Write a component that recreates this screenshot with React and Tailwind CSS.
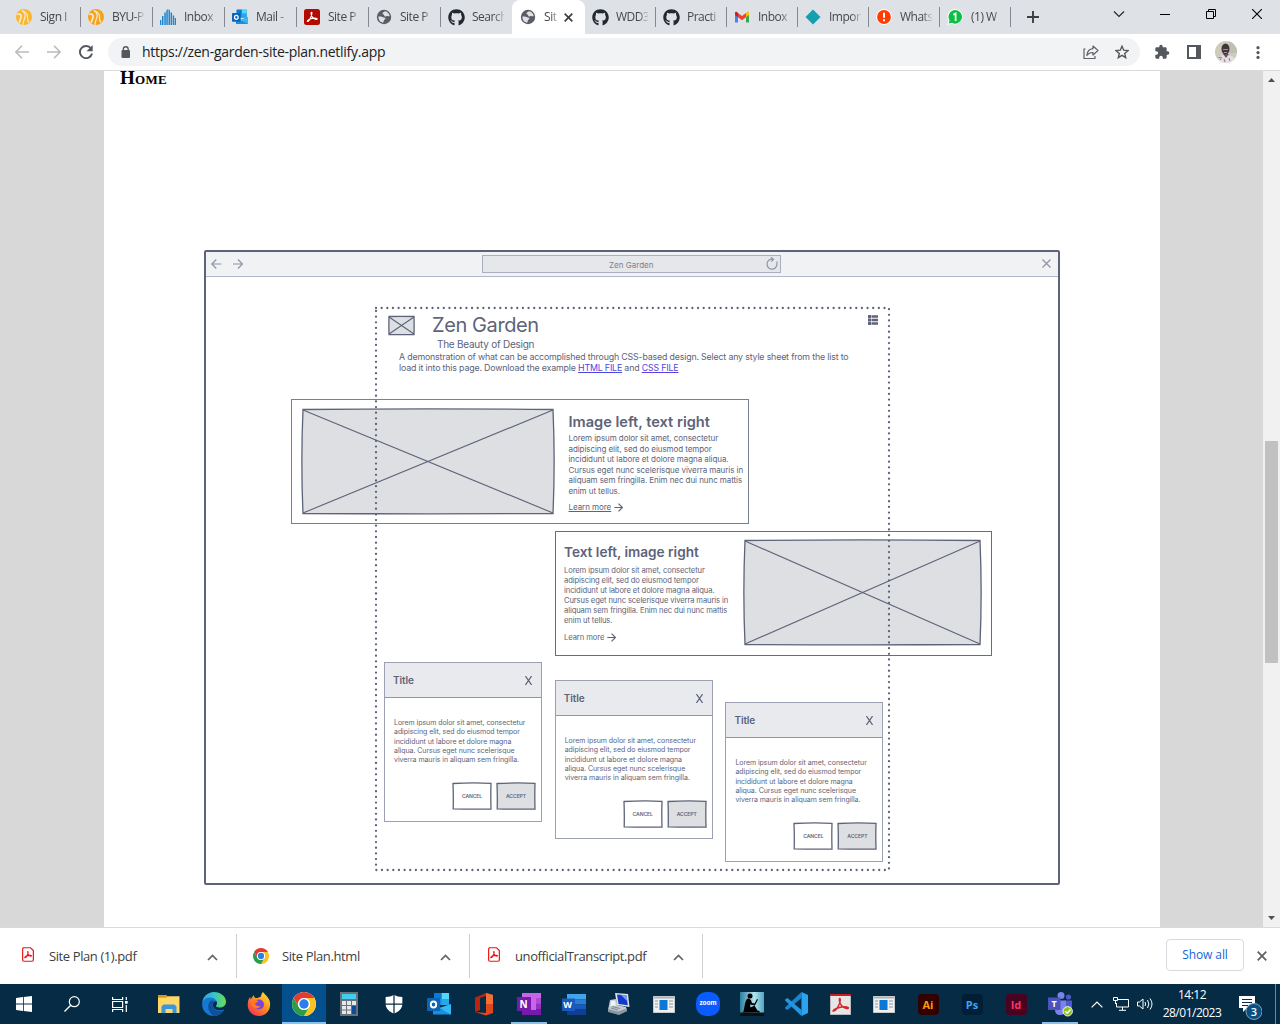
import React from "react";
import { FaGithub } from "react-icons/fa";

const INK = "#5d6379";

/* ---------- browser icons ---------- */
function ByuIcon({ color }) {
  return (
    <svg className="size-4 shrink-0" viewBox="0 0 16 16">
      <circle cx="8" cy="8" r="8" fill={color} />
      <path d="M.8 5.500C2.500 4.500 5 5 5.200 7c.2 2-1.400 3.500-2 6.800" fill="none" stroke="#f3ead2" strokeWidth="1.700" />
      <path d="M6 1.500c3.200 2.500 3.500 4 3 6.500-.5 2-2 4-1.800 7.800M6 1.500C10 3 12 5 11.500 8.500c-.2 2 0 3.500 1.600 5" fill="none" stroke="#f3ead2" strokeWidth="1.200" />
    </svg>
  );
}
function BarsIcon() {
  return (
    <svg className="size-4 shrink-0" viewBox="0 0 16 16" fill="#1f86d0">
      <path d="M0 11h1.300v5H0zM2 7h1.500v9H2zM4.300 3.500h1.500V16H4.300zM6.300 1.500l1.500-1.500v16H6.300zM8.500 0L10 1.500V16H8.500zM10.600 3.500h1.500V16h-1.500zM12.800 6.500h1.400V16h-1.400zM14.800 9H16v7h-1.200z" />
    </svg>
  );
}
function OutlookIcon({ className }) {
  return (
    <svg className={className} viewBox="0 0 24 24">
      <path d="M7 1h15v12H7z" fill="#1490df" />
      <path d="M14.500 1H22v6h-7.500z" fill="#50d9ff" />
      <path d="M7 1h7.500v6H7z" fill="#0f78d4" />
      <path d="M14.500 7H22v6h-7.500z" fill="#28a8ea" />
      <path d="M6 12l9 6 9-6v10.500H6z" fill="#1a8fe0" />
      <path d="M24 12v10.500L12 16z" fill="#35b8f1" />
      <rect x="0" y="6" width="13" height="13" rx="1" fill="#0a64b8" />
      <ellipse cx="6.500" cy="12.500" rx="2.700" ry="3" fill="none" stroke="#fff" strokeWidth="1.900" />
    </svg>
  );
}
function AcrobatIcon() {
  return (
    <svg className="size-4 shrink-0" viewBox="0 0 16 16">
      <rect width="16" height="16" rx="2.500" fill="#b30b00" />
      <path d="M3.200 12.300c1.200.8 3-2.200 4-5C8 5 8.200 3.200 7.500 3.200S6.800 5.400 8 7.500c1.200 2 3.400 3.200 4.700 2.900 1.200-.4.200-1.500-2.700-1.300-2.800.2-6.700 1.600-6.800 3.200z" fill="none" stroke="#fff" strokeWidth="1.100" />
    </svg>
  );
}
function GlobeIcon() {
  return (
    <svg className="size-4 shrink-0" viewBox="0 0 16 16">
      <circle cx="8" cy="8" r="7.200" fill="#5a5e62" />
      <path d="M9 2.300c2.400.3 4.600 2.500 4.700 5-1 .3-1.700-.5-2.700-.3-.6.200-1.300.8-2.200.4-1-.6-.1-1.600-1.300-2C6.500 5 6 4.500 7 3.600zM2.400 7.600c1.500-.4 3.700-.2 4.600.6.900.7 2.400.3 2.500 1.300 0 1-1.300 1-1.700 1.900-.3.700 0 1.800-.7 2.300C4.300 13.300 2.300 11 2.400 7.600z" fill="#dee1e6" />
    </svg>
  );
}
function GmailIcon() {
  return (
    <svg className="size-4 shrink-0" viewBox="0 0 16 16">
      <path d="M1 5v8.500h3V7z" fill="#4285f4" />
      <path d="M15 5v8.500h-3V7z" fill="#34a853" />
      <path d="M12 4l1-1c1-.6 2 0 2 1v2l-3 2.300z" fill="#fbbc04" />
      <path d="M4 4L3 3c-1-.6-2 0-2 1v2l3 2.300z" fill="#c5221f" />
      <path d="M4 4l4 3 4-3v4.300l-4 3-4-3z" fill="#ea4335" />
    </svg>
  );
}
function DiamondIcon() {
  return (
    <svg className="size-4 shrink-0" viewBox="0 0 16 16">
      <path d="M8 .5L15.500 8 8 15.500.5 8z" fill="#169fae" />
    </svg>
  );
}
function AlertIcon() {
  return (
    <svg className="size-4 shrink-0" viewBox="0 0 16 16">
      <circle cx="8" cy="8" r="7.900" fill="#fff" />
      <circle cx="8" cy="8" r="6.900" fill="#ff3d00" />
      <path d="M8 3.800v5" stroke="#fff" strokeWidth="2" />
      <path d="M8 10.200v2" stroke="#fff" strokeWidth="2" />
    </svg>
  );
}
function WhatsIcon() {
  return (
    <svg className="size-4 shrink-0" viewBox="0 0 16 16">
      <path d="M8.300 0A7.700 7.700 0 1 1 5 14.800L.2 16l1.200-4.600A7.700 7.700 0 0 1 8.300 0z" fill="#fff" />
      <path d="M8.300 1A6.800 6.800 0 1 1 5 13.800l-3.300.8.900-3.200A6.800 6.800 0 0 1 8.300 1z" fill="#0ac143" />
      <path d="M6.300 5.800l2.300-1.300V12" fill="none" stroke="#fff" strokeWidth="1.700" />
    </svg>
  );
}
const GithubIcon = () => <FaGithub className="size-[17px] shrink-0 text-[#24292f]" />;

const TABS = [
  { label: "Sign I", icon: <ByuIcon color="#fbb62c" /> },
  { label: "BYU-P", icon: <ByuIcon color="#f5a31c" /> },
  { label: "Inbox", icon: <BarsIcon />, solid: true },
  { label: "Mail -", icon: <OutlookIcon className="size-4 shrink-0" />, solid: true },
  { label: "Site P", icon: <AcrobatIcon /> },
  { label: "Site P", icon: <GlobeIcon /> },
  { label: "Search", icon: <GithubIcon /> },
  { label: "Sit", icon: <GlobeIcon />, active: true },
  { label: "WDD3", icon: <GithubIcon />, slim: true },
  { label: "Practi", icon: <GithubIcon />, slim: true },
  { label: "Inbox", icon: <GmailIcon />, slim: true },
  { label: "Impor", icon: <DiamondIcon />, slim: true },
  { label: "Whats", icon: <AlertIcon />, slim: true },
  { label: "(1) W", icon: <WhatsIcon />, slim: true },
];

function Tab({ label, icon, active, slim }) {
  if (active) {
    return (
      <div className="flex h-[34px] w-[73px] items-center rounded-t-lg bg-white pl-2">
        {icon}
        <span className="ml-2 w-[14px] whitespace-nowrap text-[12px] tracking-[-0.4px] text-[#45494d] [mask-image:linear-gradient(to_right,black_50%,transparent_110%)]">
          {label}
        </span>
        <svg className="ml-[6px] size-[9px]" viewBox="0 0 9 9">
          <path d="M.7.700l7.600 7.600M8.300.7L.7 8.300" stroke="#3c4043" strokeWidth="1.700" />
        </svg>
      </div>
    );
  }
  return (
    <div className={slim ? "flex h-[34px] w-[71px] items-center pl-[7px]" : "flex h-[34px] w-[72px] items-center pl-2"}>
      <div className="flex w-4 shrink-0 justify-center">{icon}</div>
      <span className="ml-2 w-8 whitespace-pre text-[12px] tracking-[-0.5px] text-[#45494d] [mask-image:linear-gradient(to_right,black_70%,transparent_105%)]">
        {label}
      </span>
      {label !== "Search" && <span className={slim ? "ml-auto h-5 w-px bg-[#85898f]" : "-mr-px ml-auto h-5 w-px bg-[#85898f]"} />}
    </div>
  );
}

function TabStrip() {
  return (
    <div className="flex h-[34px] bg-[#dee1e6] pl-2">
      <div className="flex">
        {TABS.map((t, i) => (
          <Tab key={i} {...t} />
        ))}
      </div>
      <svg className="mt-[11px] ml-[16px] size-3" viewBox="0 0 12 12">
        <path d="M6 0v12M0 6h12" stroke="#3c4043" strokeWidth="1.900" />
      </svg>
      <svg className="mt-[9px] ml-auto h-[10px] w-[12px]" viewBox="0 0 12 10">
        <path d="M1 2.500l5 5 5-5" fill="none" stroke="#222" strokeWidth="1.100" />
      </svg>
      <svg className="mt-[9px] ml-[35px] h-[10px] w-[10px]" viewBox="0 0 10 10">
        <path d="M0 5.500h10" stroke="#000" />
      </svg>
      <svg className="mt-[9px] ml-[36px] h-[10px] w-[10px]" viewBox="0 0 10 10">
        <path d="M.5 2.500h7v7h-7zM2.500 2.500v-2h7v7h-2" fill="none" stroke="#000" />
      </svg>
      <svg className="mt-[9px] mr-[18px] ml-[36px] h-[10px] w-[10px]" viewBox="0 0 10 10">
        <path d="M0 0l10 10M10 0L0 10" stroke="#000" strokeWidth="1.100" />
      </svg>
    </div>
  );
}

function Toolbar() {
  return (
    <div className="flex h-[37px] items-center border-b border-[#d8dadc] bg-white">
      <svg className="ml-[15px] size-[14px]" viewBox="0 0 14 14">
        <path d="M14 7H1M7 .8L.9 7 7 13.200" fill="none" stroke="#b9bbbd" strokeWidth="1.600" />
      </svg>
      <svg className="ml-[18px] size-[14px]" viewBox="0 0 14 14">
        <path d="M0 7h13M7 .8L13.100 7 7 13.200" fill="none" stroke="#b9bbbd" strokeWidth="1.600" />
      </svg>
      <svg className="ml-[18px] size-[14px]" viewBox="0 0 14 14">
        <path d="M12 3.500A6.100 6.100 0 1 0 13 8.500" fill="none" stroke="#54585c" strokeWidth="1.900" />
        <path d="M13.700 0v6.200H7.500z" fill="#54585c" />
      </svg>
      <div className="ml-[15px] flex h-7 w-[1032px] items-center rounded-full bg-[#f1f3f4]">
        <svg className="ml-[13px] h-[12px] w-[10px]" viewBox="0 0 10 12">
          <rect x="0.500" y="4" width="8.500" height="8" rx="1" fill="#54585c" />
          <path d="M2.300 5V3.200a2.400 2.400 0 0 1 4.900 0V5" fill="none" stroke="#54585c" strokeWidth="1.300" />
        </svg>
        <span className="ml-[11px] text-[14px] leading-7 tracking-[-0.28px] text-[#202124]">https://zen-garden-site-plan.netlify.app</span>
        <svg className="ml-auto h-[15px] w-[16px]" viewBox="0 0 16 15">
          <path d="M2.500 4H1v9.500h11V11" fill="none" stroke="#5f6368" strokeWidth="1.200" />
          <path d="M10 1l5 4.500L10 10V7.500C7 7.400 5.300 8.300 3.800 10.500 4.200 6.500 6.500 3.900 10 3.600z" fill="none" stroke="#5f6368" strokeWidth="1.200" strokeLinejoin="round" />
        </svg>
        <svg className="mr-[11px] ml-[16px] size-[14px]" viewBox="0 0 14 14">
          <path d="M7 1.200l1.700 4 4.300.4-3.300 2.800 1 4.300L7 10.400l-3.700 2.300 1-4.300L1 5.600l4.300-.4z" fill="none" stroke="#54585c" strokeWidth="1.400" />
        </svg>
      </div>
      <svg className="ml-[14px] size-[16px]" viewBox="0 0 24 24" fill="#54585c">
        <path d="M20.500 11H19V7c0-1.100-.9-2-2-2h-4V3.500a2.500 2.500 0 0 0-5 0V5H4c-1.100 0-2 .9-2 2v3.800h1.500a2.700 2.700 0 0 1 0 5.400H2V20c0 1.100.9 2 2 2h3.800v-1.500a2.700 2.700 0 0 1 5.400 0V22H17c1.100 0 2-.9 2-2v-4h1.500a2.500 2.500 0 0 0 0-5z" />
      </svg>
      <svg className="ml-[17px] size-[14px]" viewBox="0 0 14 14">
        <path d="M1 1h12v12H1z" fill="#fff" stroke="#54585c" strokeWidth="2" />
        <path d="M9 1h4v12H9z" fill="#54585c" />
      </svg>
      <svg className="ml-[14px] size-[22px]" viewBox="0 0 22 22">
        <defs>
          <clipPath id="avatar"><circle cx="11" cy="11" r="11" /></clipPath>
        </defs>
        <g clipPath="url(#avatar)">
          <path d="M0 0h22v22H0z" fill="#cdcbb9" />
          <path d="M14 0h8v12h-8z" fill="#bfc0b4" />
          <path d="M1 22c0-6 4-8 9.500-8s10 2 10 8z" fill="#e4dfe5" />
          <path d="M8 13l3 4 3-4z" fill="#6b5660" />
          <ellipse cx="10.500" cy="8" rx="4" ry="5.600" fill="#42343b" />
          <path d="M8 8.500h5M9 11.500h3" stroke="#a08a96" strokeWidth="1" />
          <path d="M5 19l2-3M15 20l-1-3M10 21l-1-3M3 17l3-1" stroke="#8a8088" />
        </g>
      </svg>
      <svg className="ml-[19px] h-[13px] w-[4px]" viewBox="0 0 4 13" fill="#54585c">
        <circle cx="2" cy="1.700" r="1.600" />
        <circle cx="2" cy="6.600" r="1.600" />
        <circle cx="2" cy="11.400" r="1.600" />
      </svg>
    </div>
  );
}

/* ---------- wireframe ---------- */
function ImageBox({ className, w, h, bow = 1.2 }) {
  return (
    <svg className={className} width={w} height={h} viewBox={`0 0 ${w} ${h}`}>
      <path
        d={`M2 1.500Q${w / 2} ${1.500 - bow} ${w - 2} 1.500Q${w - 2 + bow * 1.9} ${h / 2} ${w - 2} ${h - 1.500}Q${w / 2} ${h - 1.500 + bow / 2} 2 ${h - 1.500}Q${2 - bow * 1.9} ${h / 2} 2 1.500Z`}
        fill="#dedfe3" stroke={INK} strokeWidth="1.300"
      />
      <path d={`M2 2L${w - 2} ${h - 2}M${w - 2} 2L2 ${h - 2}`} stroke={INK} strokeWidth="1.100" />
    </svg>
  );
}

function Arrow({ className }) {
  return (
    <svg className={className} viewBox="0 0 9 9">
      <path d="M.3 4.500h8M4.500.6l4 3.900-4 3.900" fill="none" stroke={INK} strokeWidth="1.200" />
    </svg>
  );
}

const LOREM = [
  "Lorem ipsum dolor sit amet, consectetur",
  "adipiscing elit, sed do eiusmod tempor",
  "incididunt ut labore et dolore magna aliqua.",
  "Cursus eget nunc scelerisque viverra mauris in",
  "aliquam sem fringilla. Enim nec dui nunc mattis",
  "enim ut tellus.",
];
const LOREM_CARD = [
  "Lorem ipsum dolor sit amet, consectetur",
  "adipiscing elit, sed do eiusmod tempor",
  "incididunt ut labore et dolore magna",
  "aliqua. Cursus eget nunc scelerisque",
  "viverra mauris in aliquam sem fringilla.",
];

function Lines({ lines, className }) {
  return (
    <div className={className}>
      {lines.map((l) => (
        <div key={l} className="whitespace-nowrap">{l}</div>
      ))}
    </div>
  );
}

function SketchButton({ children, fill }) {
  return (
    <div className="relative grid h-7 w-10 place-items-center">
      <svg className="absolute inset-0 h-7 w-10" viewBox="0 0 40 28">
        <path d="M1 1.500Q20 .5 39 1.300Q38.600 14 39 27Q20 27.500 1.200 26.800Q1.500 14 1 1.500Z" fill={fill} stroke={INK} strokeWidth="1.300" />
      </svg>
      <span className="relative text-[5px] font-semibold tracking-[-0.05px]">{children}</span>
    </div>
  );
}

function DialogCard({ className }) {
  return (
    <div className={className}>
      <div className="flex h-[35px] items-center justify-between border-b border-[#8f96aa] bg-[#e9eaed] pr-[9px] pl-2">
        <span className="text-[10px] font-semibold tracking-[-0.1px]">Title</span>
        <svg className="h-[9px] w-[7px]" viewBox="0 0 7 9">
          <path d="M.4 0l6.200 9M6.600 0L.4 9" stroke={INK} strokeWidth="1.200" />
        </svg>
      </div>
      <Lines lines={LOREM_CARD} className="mt-[20px] ml-[9px] text-[7px] leading-[9.300px] tracking-[-0.050px]" />
      <div className="mt-[18px] mr-[5px] flex justify-end gap-[4px]">
        <SketchButton fill="#fff">CANCEL</SketchButton>
        <SketchButton fill="#dedfe3">ACCEPT</SketchButton>
      </div>
    </div>
  );
}

function Wireframe() {
  return (
    <div className="relative ml-[100px] h-[635px] w-[856px] rounded-[2px] border-2 border-[#5d6379] font-[Inter,sans-serif] text-[#5d6379]">
      <div className="flex h-[25px] items-center border-b border-[#b2b8c8] bg-[#f1f2f4] pr-[7px] pl-[5px]">
        <svg className="h-[10px] w-[11px]" viewBox="0 0 11 10">
          <path d="M10.500 5H.8M5.300.5L.8 5l4.500 4.500" fill="none" stroke="#8e94a8" strokeWidth="1.200" />
        </svg>
        <svg className="ml-[11px] h-[10px] w-[10px]" viewBox="0 0 10 10">
          <path d="M0 5h9.500M5 .5L9.500 5 5 9.500" fill="none" stroke="#8e94a8" strokeWidth="1.200" />
        </svg>
        <div className="ml-[239px] flex h-[18px] w-[299px] items-center border border-[#a9afbf] bg-[#e6e7ea]">
          <span className="mt-px ml-[126px] text-[8px] tracking-[0.02px] text-[#7c7f8c]">Zen Garden</span>
          <svg className="mr-[2px] -mt-px ml-auto h-[13px] w-[12px]" viewBox="0 0 12 13">
            <path d="M7 2.200A5 5 0 1 0 11 7" fill="none" stroke="#8e94a8" strokeWidth="1.200" />
            <path d="M5 .3l2.500 2L5.300 4.600M11 7V4.500" fill="none" stroke="#8e94a8" strokeWidth="1.200" />
          </svg>
        </div>
        <svg className="-mt-[2px] ml-auto size-[9px]" viewBox="0 0 9 9">
          <path d="M.5.500l8 8M8.500.5l-8 8" stroke="#8e94a8" strokeWidth="1.200" />
        </svg>
      </div>

      <div className="mt-[37px] flex pl-[181px]">
        <ImageBox className="mt-px" w={29} h={21} bow={0.15} />
        <div className="ml-[16px] w-[108px] whitespace-nowrap">
          <div className="text-[20px] leading-[23px] tracking-[-0.400px]">Zen Garden</div>
          <div className="ml-[5px] text-[10px] leading-[15px] tracking-[-0.250px]">The Beauty of Design</div>
        </div>
        <svg className="mt-px ml-[328px] h-[10px] w-[10px]" viewBox="0 0 10 10" fill={INK}>
          <path d="M0 0h3v3H0zM0 3.500h3v3H0zM0 7h3v3H0zM3.500.3H10v2.500H3.500zM3.500 3.700H10v2.500H3.500zM3.500 7.200H10v2.500H3.500z" />
        </svg>
      </div>
      <div className="-mt-px ml-[193px] text-[8.800px] leading-[11px] tracking-[-0.160px] whitespace-nowrap">
        <div>A demonstration of what can be accomplished through CSS-based design. Select any style sheet from the list to</div>
        <div>
          load it into this page. Download the example <span className="text-[#4b45e0] underline">HTML FILE</span> and{" "}
          <span className="text-[#5b3fe0] underline">CSS FILE</span>
        </div>
      </div>

      <div className="mt-[26px] ml-[85px] flex h-[125px] w-[458px] border border-[#7a8094]">
        <ImageBox className="mt-[8px] ml-[9px]" w={254} h={107} />
        <div className="ml-[13.500px]">
          <div className="mt-[13px] text-[14.600px] leading-[18px] font-semibold whitespace-nowrap">Image left, text right</div>
          <Lines lines={LOREM} className="mt-[2px] text-[8px] leading-[10.550px] tracking-[-0.070px]" />
          <div className="mt-[5px] flex items-center text-[8px] leading-[12px]">
            <span className="tracking-[-0.050px] underline">Learn more</span>
            <Arrow className="ml-[3px] size-[9px]" />
          </div>
        </div>
      </div>

      <div className="mt-[7px] ml-[349px] flex h-[125px] w-[437px] border border-[#666c82]">
        <div className="ml-[8px] w-[179px]">
          <div className="mt-[11px] text-[13.600px] leading-[18px] font-semibold whitespace-nowrap">Text left, image right</div>
          <Lines lines={LOREM} className="mt-[5px] text-[7.600px] leading-[10.100px] tracking-[-0.100px]" />
          <div className="mt-[5px] flex items-center text-[7.600px] leading-[12px] tracking-[-0.070px]">
            <span>Learn more</span>
            <Arrow className="ml-[3px] size-[9px]" />
          </div>
        </div>
        <ImageBox className="mt-[7px]" w={239} h={107} />
      </div>

      <div className="mt-[6px] ml-[178px] flex gap-[12.700px]">
        <DialogCard className="h-[160px] w-[158px] border border-[#9ba1b3] bg-white" />
        <DialogCard className="mt-[18px] h-[159px] w-[158px] border border-[#9ba1b3] bg-white" />
        <DialogCard className="mt-[40px] h-[160px] w-[158px] border border-[#9ba1b3] bg-white" />
      </div>

      <svg className="pointer-events-none absolute top-[54px] left-[167.500px]" width="517" height="568" viewBox="0 0 517 568">
        <path d="M2 2H515V564H2Z" fill="none" stroke={INK} strokeWidth="2.300" strokeLinecap="round" strokeDasharray="0 5.650" />
      </svg>
    </div>
  );
}

function PageView() {
  return (
    <div className="flex h-[856px] bg-[#d8d8d8]">
      <div className="ml-[104px] w-[1056px] overflow-hidden bg-white">
        <div className="-mt-[5px] ml-4 h-[184px] font-['Liberation_Serif',serif] text-[19px] leading-6 font-bold tracking-[0.3px] text-black [font-variant:small-caps]">
          Home
        </div>
        <Wireframe />
      </div>
      <div className="ml-auto flex w-[17px] flex-col items-center bg-[#f1f1f1]">
        <svg className="mt-[7px] h-[4px] w-[7px]" viewBox="0 0 7 4"><path d="M3.500 0L7 4H0z" fill="#505050" /></svg>
        <div className="mt-[359px] h-[222px] w-[13px] bg-[#c1c1c1]" />
        <svg className="mt-auto mb-[7px] h-[4px] w-[7px]" viewBox="0 0 7 4"><path d="M3.500 4L7 0H0z" fill="#505050" /></svg>
      </div>
    </div>
  );
}

/* ---------- downloads ---------- */
function PdfIcon() {
  return (
    <svg className="-mt-[3px] ml-[2px] h-[15px] w-[12px]" viewBox="0 0 13 16">
      <path d="M2.500.7h6.800l3 3V14a1.300 1.300 0 0 1-1.300 1.300H2A1.300 1.300 0 0 1 .7 14V2A1.300 1.300 0 0 1 2.500.7z" fill="#fff" stroke="#f01414" strokeWidth="1.300" />
      <path d="M3 11.500c1 .3 2.500-2 3.200-4 .5-1.600.6-2.800.2-2.800s-.5 1.500.4 3c.9 1.400 2.400 2.300 3.200 2 .8-.4-.2-1-2-.8-2 .2-4.800 1.300-5 2.600z" fill="none" stroke="#f01414" strokeWidth="1.200" />
    </svg>
  );
}
function ChromeIcon({ className }) {
  return (
    <svg className={className} viewBox="0 0 24 24">
      <circle cx="12" cy="12" r="12" fill="#fff" />
      <path d="M1.610 6A12 12 0 0 1 22.390 6H12a6 6 0 0 0-5.200 9z" fill="#e33b2e" />
      <path d="M22.390 6A12 12 0 0 1 12 24l5.200-9A6 6 0 0 0 12 6z" fill="#fcc31e" />
      <path d="M12 24A12 12 0 0 1 1.610 6L6.800 15a6 6 0 0 0 10.400 0z" fill="#2a9d48" />
      <circle cx="12" cy="12" r="6" fill="#fff" />
      <circle cx="12" cy="12" r="4.700" fill="#2f7de9" />
    </svg>
  );
}
function Download({ icon, name }) {
  return (
    <div className="flex h-[44px] w-[233px] items-center border-r border-[#cdcfd1] pr-[18px] pl-4">
      <div className="flex w-[29px] shrink-0">{icon}</div>
      <span className="mt-[2px] text-[13px] tracking-[-0.400px] whitespace-nowrap text-[#3c4043]">{name}</span>
      <svg className="mt-[2px] ml-auto h-[7px] w-[11px]" viewBox="0 0 11 7">
        <path d="M1 6l4.500-4.500L10 6" fill="none" stroke="#5f6368" strokeWidth="1.700" />
      </svg>
    </div>
  );
}
function DownloadBar() {
  return (
    <div className="flex h-[57px] items-center border-t border-[#d8dadc] bg-white pl-[4px]">
      <Download icon={<PdfIcon />} name="Site Plan (1).pdf" />
      <Download icon={<ChromeIcon className="-mt-px size-4" />} name="Site Plan.html" />
      <Download icon={<PdfIcon />} name="unofficialTranscript.pdf" />
      <div className="-mt-[2px] ml-auto h-8 w-[78px] rounded-[4px] border border-[#d8dadf] text-center text-[12px] leading-[29px] font-medium tracking-[-0.1px] text-[#1a64dd]">
        Show all
      </div>
      <svg className="-mt-px mr-[13px] ml-[13px] size-[10px]" viewBox="0 0 10 10">
        <path d="M.7.700l8.600 8.600M9.300.7L.7 9.300" stroke="#5f6368" strokeWidth="1.800" />
      </svg>
    </div>
  );
}

/* ---------- taskbar ---------- */
const Svg = ({ children, className = "size-6" }) => (
  <svg className={className} viewBox="0 0 24 24">{children}</svg>
);
const FileExplorer = () => (
  <Svg>
    <path d="M1 3h8.500l1.500 2.500H10L9 7H1z" fill="#d99a0c" />
    <path d="M1 5.800h8L10.500 4.300H22.500V21H1z" fill="#ffd766" />
    <path d="M4.500 21v-6.500l2-2h11l2 2V21h-4v-4h-7v4z" fill="#3a96dd" />
  </Svg>
);
const Edge = () => (
  <Svg>
    <defs>
      <linearGradient id="edgeTop" x1="0" x2="1"><stop stopColor="#25a5e8" /><stop offset=".5" stopColor="#35c1d0" /><stop offset="1" stopColor="#6be04a" /></linearGradient>
    </defs>
    <path d="M.2 14C-.5 8 3 5 7 5c4 0 7 2 7.500 5-2-1.500-4 1-3.500 4 .7 3.500 5 5.500 11 3.500C20 21.500 16.500 24 12 24 5.500 24 1 19.500.2 14z" fill="#1678d0" />
    <path d="M7.500 10c-2.500 4-1.500 10 4 13.900C17 24 20 21.500 22.300 18c-4 2-10 1.500-11.500-3.500C10 12 11.500 10 12.500 9.500 10.500 8 8.500 8.500 7.500 10z" fill="#104f9c" />
    <path d="M0 11.500C.5 5 5.500 0 12 0s12 4.500 12 9.500c0 4-3 6-6.500 6-2.500 0-3.500-1-3.500-1.500s1-1 1-3c0-2.500-3-5.500-7-5.500-4.500 0-7.500 3-8 6z" fill="url(#edgeTop)" />
  </Svg>
);
const Firefox = () => (
  <Svg>
    <defs>
      <linearGradient id="fox" x1="1" y1="0" x2="0.200" y2="1"><stop stopColor="#fff04a" /><stop offset=".45" stopColor="#ff9a1f" /><stop offset="1" stopColor="#f5304f" /></linearGradient>
    </defs>
    <path d="M16 0c1 2 5 4.500 6.500 8.500C25 16 20 24 12 24S-.5 17.500 1 10c.3-2.500 1.300-4 2.300-5l.4 2.500C5 5.500 6 3.500 7 3c0 2 .6 2.500 1.500 3 2 .2 4-.5 5.500-1.500C14 2.500 15 1 16 0z" fill="url(#fox)" />
    <circle cx="12" cy="12.500" r="5" fill="#7b45d8" />
    <path d="M5 9c2.500-1.500 5-1 6.500.3-1 1.500-3 1.200-3.500 2.700 1 2 4 2.500 5.500 2-1 3-7 3-8.500-1z" fill="#ff7b21" />
  </Svg>
);
const Calculator = () => (
  <Svg>
    <path d="M3 0h18v24H3z" fill="#69727a" />
    <path d="M5 2h14v5H5z" fill="#3fd0ef" />
    <path d="M5 9h4v4H5zM10 9h4v4h-4zM15 9h4v4h-4zM5 14h4v3.500H5zM10 14h4v3.500h-4zM5 18.500h4V22H5zM10 18.500h4V22h-4z" fill="#e5e7e9" />
    <path d="M15 14h4v8h-4z" fill="#0f4c9b" />
  </Svg>
);
const Shield = () => (
  <Svg className="size-5">
    <path d="M12 1c3 2 6 2.500 10 2.500V12c0 6-5 9.500-10 11.500C7 21.500 2 18 2 12V3.500C6 3.500 9 3 12 1z" fill="#fff" />
    <path d="M12 0v24M1 12h22" stroke="#062c45" strokeWidth="1.500" />
  </Svg>
);
const Office = () => (
  <Svg>
    <path d="M3 5.500L14 1v3L8 6v12l-5 2z" fill="#b9250f" />
    <path d="M14 1l7 2v18l-7 2.500L3 20l11 1z" fill="#e2461b" />
    <path d="M14 1l7 2v9h-7z" fill="#f0703a" />
  </Svg>
);
const TileLetter = ({ className, children }) => <span className={className}>{children}</span>;
const Word = () => (
  <div className="relative h-[21px] w-6">
    <svg className="absolute inset-0 h-[21px] w-6" viewBox="0 0 24 21">
      <path d="M5 0h19v5.500H5z" fill="#41a5ee" />
      <path d="M5 5.500h19v5H5z" fill="#2b7cd3" />
      <path d="M5 10.500h19v5H5z" fill="#185abd" />
      <path d="M5 15.500h19V21H5z" fill="#103f91" />
      <path d="M0 4.500h13v12.500H0z" fill="#185abd" />
    </svg>
    <TileLetter className="absolute top-[5px] left-0 w-[12px] text-center text-[9px] leading-[11px] font-bold text-white">W</TileLetter>
  </div>
);
const OneNote = () => (
  <div className="relative size-6">
    <svg className="absolute inset-0 size-6" viewBox="0 0 24 24">
      <path d="M5 1h19v22H5z" fill="#ca64ea" />
      <path d="M19 6h5v5.500h-5z" fill="#ae4bd5" />
      <path d="M19 11.500h5V17h-5z" fill="#9332bf" />
      <path d="M5 18h14v5H5zM19 17h5v6h-5z" fill="#7719aa" />
      <path d="M0 5h14v14H0z" fill="#7719aa" />
    </svg>
    <TileLetter className="absolute top-[6px] left-0 w-[14px] text-center text-[10px] leading-[12px] font-bold text-white">N</TileLetter>
  </div>
);
const Computer = () => (
  <Svg>
    <path d="M8 1l13 1 1.500 13L10 13z" fill="#dfe4ea" />
    <path d="M10 2.500l9.500.7 1.300 10L11.500 12z" fill="#1438c8" />
    <path d="M14 3l5.500.300.8 6z" fill="#7b9dff" />
    <path d="M3 8l6-1 1.500 6 8.500 2 1 4-8 3.500L1 18z" fill="#c3cad2" />
    <path d="M1 17l10 2.500 9-3v2.500l-8 4L1 20z" fill="#8c969f" />
    <path d="M4 9l4-.5 1 5-5.500.5z" fill="#f1f3f5" />
    <path d="M4 16l7 2M5 14.500l8 2" stroke="#7e8891" />
  </Svg>
);
const WindowApp = () => (
  <svg className="h-[17px] w-[22px]" viewBox="0 0 22 17">
    <path d="M0 0h22v17H0z" fill="#f0f0f0" stroke="#9aa4ac" />
    <path d="M1 1h20v1.500H1z" fill="#aab3bb" />
    <path d="M6.500 4h8v10h-8z" fill="#0a78d6" />
    <path d="M2 5h3M2 8h3M2 11h3M16 5h4M16 8h4M16 11h4" stroke="#8e979e" />
  </svg>
);
const Zoom = () => (
  <div className="grid size-6 place-items-center rounded-[10px] bg-[#0b5cff]">
    <span className="-mt-px text-[6.500px] leading-none font-bold tracking-[-0.2px] text-white">zoom</span>
  </div>
);
const Kindle = () => (
  <Svg>
    <defs><linearGradient id="kin" x1="0" x2="1"><stop stopColor="#2b7f9e" /><stop offset=".6" stopColor="#b5e4f0" /><stop offset="1" stopColor="#4ba6c3" /></linearGradient></defs>
    <path d="M0 0h24v24H0z" fill="url(#kin)" />
    <path d="M0 20.500h24V24H0z" fill="#0a1114" />
    <circle cx="10" cy="4" r="2.500" />
    <path d="M8 6.500c2.500 0 3.500 2.500 4 4.500l2.500.5 2.500-4.500 1 .5-3 6-5-1 .5 3 4-2 3 5 2 .5.500 1.500H3C5 16 4.500 7.500 8 6.500z" />
  </Svg>
);
const VsCode = () => (
  <Svg>
    <path d="M17.500 6L3.500 18 1 16.500v-1L17.500 0z" fill="#1c84cf" />
    <path d="M17.500 18L3.500 6 1 7.500v1L17.500 24z" fill="#2496e0" />
    <path d="M17.500 0L24 3v18l-6.500 3z" fill="#2aa4f0" />
  </Svg>
);
const Reader = () => (
  <svg className="h-[21px] w-[21px]" viewBox="0 0 21 21">
    <path d="M0 0h21v21H0z" fill="#e6e6e7" stroke="#8b8f93" />
    <path d="M0 0h21v2H0z" fill="#c82020" />
    <path d="M3 17c2 1 5-3.500 6.500-7.500 1-3 1-5 .3-5s-.8 3 1 6c1.700 2.600 5 4.500 7 4 1.700-.6 0-2-4-1.700C9.500 13 3.500 15 3 17z" fill="none" stroke="#d8262a" strokeWidth="1.400" />
  </svg>
);
const Teams = () => (
  <div className="relative size-6">
    <svg className="absolute inset-0 size-6 overflow-visible" viewBox="0 0 24 24">
      <circle cx="13" cy="3.500" r="3.500" fill="#7b83eb" />
      <circle cx="20.500" cy="5" r="2.600" fill="#5059c9" />
      <path d="M17 8.500h7v7c0 3-3 4.500-6 3.500z" fill="#5059c9" />
      <path d="M7 8.500h11V17c0 4-3 6-6 6s-5-2-5-5z" fill="#7b83eb" />
      <path d="M0 5.500h12.500v12.500H0z" fill="#4b53bc" />
      <circle cx="19.700" cy="19.300" r="4.700" fill="#8bc21f" stroke="#fff" strokeWidth=".9" />
      <path d="M17.200 19.300l2 2 3.300-3.800" fill="none" stroke="#fff" strokeWidth="1.400" />
    </svg>
    <TileLetter className="absolute top-[6px] left-0 w-[12px] text-center text-[9px] leading-[12px] font-bold text-white">T</TileLetter>
  </div>
);

const PINNED = [
  { icon: <Calculator /> }, { icon: <Shield /> }, { icon: <OutlookIcon className="size-6" /> }, { icon: <Office /> },
  { icon: <OneNote />, open: true }, { icon: <Word /> }, { icon: <Computer /> }, { icon: <WindowApp /> },
];
const APPS = [
  { icon: <Zoom /> }, { icon: <Kindle /> }, { icon: <VsCode /> }, { icon: <Reader /> }, { icon: <WindowApp /> },
  { icon: <div className="grid size-[21px] place-items-center rounded-[4px] bg-[#330000] text-[11px] leading-none font-bold text-[#ff9a00]">Ai</div> },
  { icon: <div className="grid size-[21px] place-items-center rounded-[4px] bg-[#001e36] text-[11px] leading-none font-bold text-[#31a8ff]">Ps</div> },
  { icon: <div className="grid size-[21px] place-items-center rounded-[4px] bg-[#49021f] text-[11px] leading-none font-bold text-[#ff3366]">Id</div> },
  { icon: <Teams />, open: true },
];
function AppSlot({ icon, open, className }) {
  return (
    <div className={className}>
      <div className="grid h-[38px] place-items-center pt-[2px]">{icon}</div>
      {open && <div className="h-[2px] w-[36px] bg-[#8cc0ea]" />}
    </div>
  );
}

function Taskbar() {
  return (
    <div className="flex h-10 bg-[#062c45]">
      <div className="grid w-12 place-items-center">
        <svg className="size-4" viewBox="0 0 16 16" fill="#fff">
          <path d="M0 2l7-1v6.600H0zM7.800.9L16 0v7.600H7.800zM0 8.400h7V15l-7-1zM7.800 8.400H16V16l-8.200-1z" />
        </svg>
      </div>
      <div className="grid w-12 place-items-center">
        <svg className="size-4" viewBox="0 0 16 16">
          <circle cx="10.300" cy="5.700" r="5" fill="none" stroke="#fff" strokeWidth="1.200" />
          <path d="M6.700 9.300L.5 15.500" stroke="#fff" strokeWidth="1.300" />
        </svg>
      </div>
      <div className="grid w-12 place-items-center">
        <svg className="h-[15px] w-4" viewBox="0 0 16 15">
          <path d="M.6 0v2.500h10V0M.6 15v-2.500h10V15M.6 4.500h10v6H.600zM14.300 0v3M14.300 8v7" fill="none" stroke="#fff" strokeWidth="1.200" />
          <path d="M13 4h2.700v2.700H13z" fill="#fff" />
        </svg>
      </div>
      <div className="ml-[2px] grid w-[45px] place-items-center"><FileExplorer /></div>
      <div className="grid w-[45px] place-items-center"><Edge /></div>
      <div className="mr-px grid w-[45px] place-items-center"><Firefox /></div>
      <div className="grid w-[44px] place-items-center border-b-2 border-[#84c3f3] bg-[#03508c] pt-[2px]"><ChromeIcon className="size-6" /></div>
      {PINNED.map((app, i) => (
        <AppSlot key={i} {...app} className="flex w-[45px] shrink-0 flex-col items-center" />
      ))}
      {APPS.map((app, i) => (
        <AppSlot key={i} {...app} className="flex w-[44px] shrink-0 flex-col items-center" />
      ))}
      <div className="flex min-w-0 grow items-center text-white">
        <svg className="ml-[9px] h-[7px] w-[12px] shrink-0" viewBox="0 0 12 7"><path d="M.6 6.400L6 1l5.400 5.400" fill="none" stroke="#fff" strokeWidth="1.200" /></svg>
        <svg className="ml-[10px] h-[14px] w-4 shrink-0" viewBox="0 0 16 14">
          <path d="M5 2.500h10.500v7.500H3.500V6M9.500 10v3M6 13.300h7" fill="none" stroke="#fff" />
          <path d="M.5.500h4v3h-4zM2.500 3.500V7" fill="none" stroke="#fff" />
        </svg>
        <svg className="ml-[8px] h-[14px] w-[17px] shrink-0" viewBox="0 0 17 14">
          <path d="M.5 5h2L6 2v10L2.500 9h-2zM8 5q1.300 2 0 4M10.500 3q2.700 4 0 8M13 1.500q4 5.500 0 11" fill="none" stroke="#fff" />
        </svg>
        <div className="ml-[8px] w-[60px] text-center text-[12px] leading-[18px] tracking-[-0.500px] whitespace-nowrap">
          <div>14:12</div>
          <div>28/01/2023</div>
        </div>
        <div className="relative mt-[8px] ml-[16px] h-[24px] w-[24px] shrink-0">
          <svg className="absolute inset-0 size-6" viewBox="0 0 24 24">
            <path d="M1 0h16v12H9l-4 4v-4H1z" fill="#fff" />
            <path d="M4 3.500h10M4 6.500h10M4 9.500h6" stroke="#062c45" />
            <circle cx="16" cy="15.500" r="8" fill="#0b4f80" stroke="#7ba6c2" />
          </svg>
          <span className="absolute top-[9px] left-[12px] w-2 text-center text-[11px] leading-[13px] font-semibold">3</span>
        </div>
        <div className="ml-auto h-10 w-[5px] shrink-0 border-l border-[#6e8795]" />
      </div>
    </div>
  );
}

export default function App() {
  return (
    <div className="h-[1024px] w-[1280px] overflow-hidden bg-white font-['Open_Sans','Noto_Sans',sans-serif]">
      <TabStrip />
      <Toolbar />
      <PageView />
      <DownloadBar />
      <Taskbar />
    </div>
  );
}
